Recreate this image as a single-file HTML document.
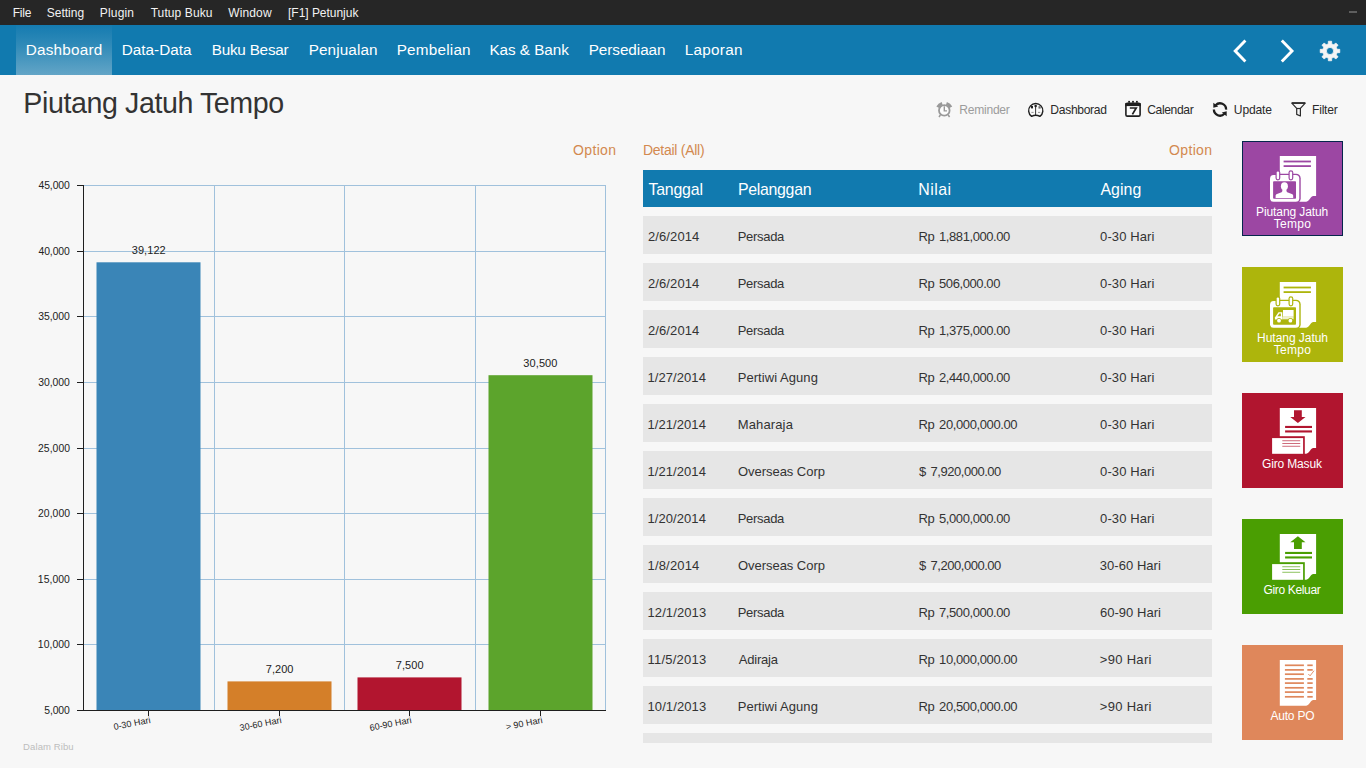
<!DOCTYPE html>
<html lang="id"><head><meta charset="utf-8"><title>Piutang Jatuh Tempo</title>
<style>
html,body{margin:0;padding:0;}
body{width:1366px;height:768px;overflow:hidden;background:#f7f7f7;font-family:"Liberation Sans", sans-serif;position:relative;}
.t{position:absolute;margin:0;white-space:pre;line-height:20px;font-weight:normal;font-family:"Liberation Sans", sans-serif;z-index:3;}
.b{position:absolute;z-index:1;}
svg{position:absolute;left:0;top:0;z-index:2;}
.row{left:643px;width:569px;height:38px;background:#e6e6e6;}
.tile{left:1242px;width:101px;height:95px;}
</style></head>
<body>
<header id="menubar">
<div class="b" style="left:0;top:0;width:1366px;height:25px;background:#262626"></div>
<div class="b" style="left:1349px;top:11px;width:8px;height:2px;background:#5e5e5e"></div>
<span class="t" style="left:12.74px;top:2.84px;font-size:12px;color:#f2f2f2;letter-spacing:-0.240px;">File</span>
<span class="t" style="left:46.73px;top:2.84px;font-size:12px;color:#f2f2f2;letter-spacing:0.003px;">Setting</span>
<span class="t" style="left:99.74px;top:2.84px;font-size:12px;color:#f2f2f2;letter-spacing:0.187px;">Plugin</span>
<span class="t" style="left:150.64px;top:2.84px;font-size:12px;color:#f2f2f2;letter-spacing:0.096px;">Tutup Buku</span>
<span class="t" style="left:228.31px;top:2.84px;font-size:12px;color:#f2f2f2;letter-spacing:0.119px;">Window</span>
<span class="t" style="left:288.02px;top:2.84px;font-size:12px;color:#f2f2f2;letter-spacing:-0.026px;">[F1] Petunjuk</span>
</header>
<nav id="ribbon">
<div class="b" style="left:0;top:25px;width:1366px;height:50px;background:#117aaf"></div>
<div class="b" style="left:16px;top:25px;width:96px;height:50px;background:linear-gradient(to bottom,#157bb0 0%,#2f8ab8 40%,#63a5c7 100%)"></div>
<span class="t" style="left:25.79px;top:39.70px;font-size:15.3px;color:#ffffff;letter-spacing:0.208px;">Dashboard</span>
<span class="t" style="left:121.73px;top:39.70px;font-size:15.3px;color:#ffffff;letter-spacing:0.011px;">Data-Data</span>
<span class="t" style="left:211.73px;top:39.70px;font-size:15.3px;color:#ffffff;letter-spacing:-0.237px;">Buku Besar</span>
<span class="t" style="left:308.73px;top:39.70px;font-size:15.3px;color:#ffffff;letter-spacing:0.097px;">Penjualan</span>
<span class="t" style="left:396.73px;top:39.70px;font-size:15.3px;color:#ffffff;letter-spacing:0.200px;">Pembelian</span>
<span class="t" style="left:489.42px;top:39.70px;font-size:15.3px;color:#ffffff;letter-spacing:-0.052px;">Kas &amp; Bank</span>
<span class="t" style="left:588.73px;top:39.70px;font-size:15.3px;color:#ffffff;letter-spacing:-0.063px;">Persediaan</span>
<span class="t" style="left:684.73px;top:39.70px;font-size:15.3px;color:#ffffff;letter-spacing:0.267px;">Laporan</span>
</nav>
<div id="pagehead">
<h1 class="t" style="left:23.37px;top:93.09px;font-size:28.6px;color:#333333;letter-spacing:-0.410px;">Piutang Jatuh Tempo</h1>
<span class="t" style="left:959.28px;top:99.81px;font-size:12.1px;color:#9c9c9c;letter-spacing:-0.266px;">Reminder</span>
<span class="t" style="left:1050.35px;top:99.81px;font-size:12.1px;color:#2a2a2a;letter-spacing:-0.320px;">Dashborad</span>
<span class="t" style="left:1147.15px;top:99.81px;font-size:12.1px;color:#2a2a2a;letter-spacing:-0.356px;">Calendar</span>
<span class="t" style="left:1233.84px;top:99.81px;font-size:12.1px;color:#2a2a2a;letter-spacing:-0.157px;">Update</span>
<span class="t" style="left:1312.07px;top:99.81px;font-size:12.1px;color:#2a2a2a;letter-spacing:-0.243px;">Filter</span>
</div>
<section id="chart">
<span class="t" style="left:573.10px;top:140.15px;font-size:14px;color:#d3894f;letter-spacing:0.328px;">Option</span>
<span class="t" style="left:38.46px;top:175.90px;font-size:10.4px;color:#222222;letter-spacing:-0.085px;">45,000</span>
<span class="t" style="left:38.46px;top:241.90px;font-size:10.4px;color:#222222;letter-spacing:-0.085px;">40,000</span>
<span class="t" style="left:38.17px;top:306.90px;font-size:10.4px;color:#222222;letter-spacing:-0.029px;">35,000</span>
<span class="t" style="left:38.17px;top:372.90px;font-size:10.4px;color:#222222;letter-spacing:-0.029px;">30,000</span>
<span class="t" style="left:38.07px;top:438.90px;font-size:10.4px;color:#222222;letter-spacing:0.030px;">25,000</span>
<span class="t" style="left:38.07px;top:503.90px;font-size:10.4px;color:#222222;letter-spacing:0.030px;">20,000</span>
<span class="t" style="left:37.87px;top:569.90px;font-size:10.4px;color:#222222;letter-spacing:0.032px;">15,000</span>
<span class="t" style="left:37.87px;top:634.90px;font-size:10.4px;color:#222222;letter-spacing:0.032px;">10,000</span>
<span class="t" style="left:44.20px;top:700.90px;font-size:10.4px;color:#222222;letter-spacing:-0.086px;">5,000</span>
<span class="t" style="left:131.71px;top:240.19px;font-size:11px;color:#222222;letter-spacing:0.072px;">39,122</span>
<span class="t" style="left:523.32px;top:353.19px;font-size:11px;color:#222222;letter-spacing:0.098px;">30,500</span>
<span class="t" style="left:265.79px;top:659.19px;font-size:11px;color:#222222;letter-spacing:0.021px;">7,200</span>
<span class="t" style="left:395.79px;top:655.19px;font-size:11px;color:#222222;letter-spacing:0.075px;">7,500</span>
<span class="t" style="left:23.08px;top:736.71px;font-size:9.5px;color:#bdbdbd;letter-spacing:0.105px;">Dalam Ribu</span>
</section>
<section id="detail">
<div class="b" style="left:643px;top:170px;width:569px;height:37px;background:#117aaf"></div>
<div class="b row" style="top:216px;"></div>
<div class="b row" style="top:263px;"></div>
<div class="b row" style="top:310px;"></div>
<div class="b row" style="top:357px;"></div>
<div class="b row" style="top:404px;"></div>
<div class="b row" style="top:451px;"></div>
<div class="b row" style="top:498px;"></div>
<div class="b row" style="top:545px;"></div>
<div class="b row" style="top:592px;"></div>
<div class="b row" style="top:639px;"></div>
<div class="b row" style="top:686px;"></div>
<div class="b row" style="top:733px;height:10px;"></div>
<span class="t" style="left:643.03px;top:140.15px;font-size:14px;color:#d3894f;letter-spacing:-0.269px;">Detail (All)</span>
<span class="t" style="left:1169.10px;top:140.15px;font-size:14px;color:#d3894f;letter-spacing:0.328px;">Option</span>
<span class="t" style="left:648.40px;top:179.99px;font-size:15.9px;color:#ffffff;letter-spacing:-0.185px;">Tanggal</span>
<span class="t" style="left:737.94px;top:179.99px;font-size:15.9px;color:#ffffff;letter-spacing:-0.300px;">Pelanggan</span>
<span class="t" style="left:918.36px;top:179.99px;font-size:15.9px;color:#ffffff;letter-spacing:0.449px;">Nilai</span>
<span class="t" style="left:1100.38px;top:179.99px;font-size:15.9px;color:#ffffff;letter-spacing:0.059px;">Aging</span>
<span class="t" style="left:647.94px;top:226.50px;font-size:13px;color:#333333;letter-spacing:0.115px;">2/6/2014</span>
<span class="t" style="left:737.67px;top:226.50px;font-size:13px;color:#333333;letter-spacing:-0.296px;">Persada</span>
<span class="t" style="left:918.44px;top:226.50px;font-size:13px;color:#333333;letter-spacing:-0.417px;word-spacing:1.6px;">Rp 1,881,000.00</span>
<span class="t" style="left:1100.12px;top:226.50px;font-size:13px;color:#333333;letter-spacing:0.103px;">0-30 Hari</span>
<span class="t" style="left:647.94px;top:273.50px;font-size:13px;color:#333333;letter-spacing:0.115px;">2/6/2014</span>
<span class="t" style="left:737.67px;top:273.50px;font-size:13px;color:#333333;letter-spacing:-0.296px;">Persada</span>
<span class="t" style="left:918.44px;top:273.50px;font-size:13px;color:#333333;letter-spacing:-0.409px;word-spacing:1.6px;">Rp 506,000.00</span>
<span class="t" style="left:1100.12px;top:273.50px;font-size:13px;color:#333333;letter-spacing:0.103px;">0-30 Hari</span>
<span class="t" style="left:647.94px;top:320.50px;font-size:13px;color:#333333;letter-spacing:0.115px;">2/6/2014</span>
<span class="t" style="left:737.67px;top:320.50px;font-size:13px;color:#333333;letter-spacing:-0.296px;">Persada</span>
<span class="t" style="left:918.44px;top:320.50px;font-size:13px;color:#333333;letter-spacing:-0.417px;word-spacing:1.6px;">Rp 1,375,000.00</span>
<span class="t" style="left:1100.12px;top:320.50px;font-size:13px;color:#333333;letter-spacing:0.103px;">0-30 Hari</span>
<span class="t" style="left:647.50px;top:367.50px;font-size:13px;color:#333333;letter-spacing:0.071px;">1/27/2014</span>
<span class="t" style="left:737.67px;top:367.50px;font-size:13px;color:#333333;letter-spacing:0.060px;">Pertiwi Agung</span>
<span class="t" style="left:918.44px;top:367.50px;font-size:13px;color:#333333;letter-spacing:-0.417px;word-spacing:1.6px;">Rp 2,440,000.00</span>
<span class="t" style="left:1100.12px;top:367.50px;font-size:13px;color:#333333;letter-spacing:0.103px;">0-30 Hari</span>
<span class="t" style="left:647.50px;top:414.50px;font-size:13px;color:#333333;letter-spacing:0.071px;">1/21/2014</span>
<span class="t" style="left:737.67px;top:414.50px;font-size:13px;color:#333333;letter-spacing:0.145px;">Maharaja</span>
<span class="t" style="left:918.44px;top:414.50px;font-size:13px;color:#333333;letter-spacing:-0.388px;word-spacing:1.6px;">Rp 20,000,000.00</span>
<span class="t" style="left:1100.12px;top:414.50px;font-size:13px;color:#333333;letter-spacing:0.103px;">0-30 Hari</span>
<span class="t" style="left:647.50px;top:461.50px;font-size:13px;color:#333333;letter-spacing:0.071px;">1/21/2014</span>
<span class="t" style="left:738.06px;top:461.50px;font-size:13px;color:#333333;letter-spacing:-0.048px;">Overseas Corp</span>
<span class="t" style="left:919.12px;top:461.50px;font-size:13px;color:#333333;letter-spacing:-0.475px;word-spacing:1.6px;">$ 7,920,000.00</span>
<span class="t" style="left:1100.12px;top:461.50px;font-size:13px;color:#333333;letter-spacing:0.103px;">0-30 Hari</span>
<span class="t" style="left:647.50px;top:508.50px;font-size:13px;color:#333333;letter-spacing:0.071px;">1/20/2014</span>
<span class="t" style="left:737.67px;top:508.50px;font-size:13px;color:#333333;letter-spacing:-0.296px;">Persada</span>
<span class="t" style="left:918.44px;top:508.50px;font-size:13px;color:#333333;letter-spacing:-0.417px;word-spacing:1.6px;">Rp 5,000,000.00</span>
<span class="t" style="left:1100.12px;top:508.50px;font-size:13px;color:#333333;letter-spacing:0.103px;">0-30 Hari</span>
<span class="t" style="left:647.50px;top:555.50px;font-size:13px;color:#333333;letter-spacing:0.178px;">1/8/2014</span>
<span class="t" style="left:738.06px;top:555.50px;font-size:13px;color:#333333;letter-spacing:-0.048px;">Overseas Corp</span>
<span class="t" style="left:919.12px;top:555.50px;font-size:13px;color:#333333;letter-spacing:-0.475px;word-spacing:1.6px;">$ 7,200,000.00</span>
<span class="t" style="left:1099.79px;top:555.50px;font-size:13px;color:#333333;letter-spacing:0.044px;">30-60 Hari</span>
<span class="t" style="left:647.50px;top:602.50px;font-size:13px;color:#333333;letter-spacing:0.097px;">12/1/2013</span>
<span class="t" style="left:737.67px;top:602.50px;font-size:13px;color:#333333;letter-spacing:-0.296px;">Persada</span>
<span class="t" style="left:918.44px;top:602.50px;font-size:13px;color:#333333;letter-spacing:-0.417px;word-spacing:1.6px;">Rp 7,500,000.00</span>
<span class="t" style="left:1099.94px;top:602.50px;font-size:13px;color:#333333;letter-spacing:0.028px;">60-90 Hari</span>
<span class="t" style="left:647.50px;top:649.50px;font-size:13px;color:#333333;letter-spacing:0.225px;">11/5/2013</span>
<span class="t" style="left:738.66px;top:649.50px;font-size:13px;color:#333333;letter-spacing:-0.178px;">Adiraja</span>
<span class="t" style="left:918.44px;top:649.50px;font-size:13px;color:#333333;letter-spacing:-0.388px;word-spacing:1.6px;">Rp 10,000,000.00</span>
<span class="t" style="left:1099.79px;top:649.50px;font-size:13px;color:#333333;letter-spacing:0.308px;">&gt;90 Hari</span>
<span class="t" style="left:647.50px;top:696.50px;font-size:13px;color:#333333;letter-spacing:0.097px;">10/1/2013</span>
<span class="t" style="left:737.67px;top:696.50px;font-size:13px;color:#333333;letter-spacing:0.060px;">Pertiwi Agung</span>
<span class="t" style="left:918.44px;top:696.50px;font-size:13px;color:#333333;letter-spacing:-0.388px;word-spacing:1.6px;">Rp 20,500,000.00</span>
<span class="t" style="left:1099.79px;top:696.50px;font-size:13px;color:#333333;letter-spacing:0.308px;">&gt;90 Hari</span>
</section>
<aside id="tiles">
<div class="b tile" style="top:141px;background:#9c47a3;box-sizing:border-box;border:1px solid #05264c;"></div>
<div class="b tile" style="top:267px;background:#adb50c;"></div>
<div class="b tile" style="top:393px;background:#b1152f;"></div>
<div class="b tile" style="top:519px;background:#4a9e02;"></div>
<div class="b tile" style="top:645px;background:#df875b;"></div>
<span class="t" style="left:1256.01px;top:201.84px;font-size:12px;color:#ffffff;letter-spacing:-0.095px;">Piutang Jatuh</span>
<span class="t" style="left:1273.64px;top:213.84px;font-size:12px;color:#ffffff;letter-spacing:0.326px;">Tempo</span>
<span class="t" style="left:1257.07px;top:327.84px;font-size:12px;color:#ffffff;letter-spacing:-0.037px;">Hutang Jatuh</span>
<span class="t" style="left:1273.64px;top:339.84px;font-size:12px;color:#ffffff;letter-spacing:0.326px;">Tempo</span>
<span class="t" style="left:1262.05px;top:453.84px;font-size:12px;color:#ffffff;letter-spacing:-0.165px;">Giro Masuk</span>
<span class="t" style="left:1263.43px;top:579.84px;font-size:12px;color:#ffffff;letter-spacing:-0.331px;">Giro Keluar</span>
<span class="t" style="left:1270.39px;top:705.84px;font-size:12px;color:#ffffff;letter-spacing:-0.192px;">Auto PO</span>
</aside>
<svg width="1366" height="768" viewBox="0 0 1366 768">
<g shape-rendering="crispEdges">
<line x1="84" x2="606" y1="185.5" y2="185.5" stroke="#a0c1dc" stroke-width="1"/>
<line x1="84" x2="606" y1="251.5" y2="251.5" stroke="#a0c1dc" stroke-width="1"/>
<line x1="84" x2="606" y1="316.5" y2="316.5" stroke="#a0c1dc" stroke-width="1"/>
<line x1="84" x2="606" y1="382.5" y2="382.5" stroke="#a0c1dc" stroke-width="1"/>
<line x1="84" x2="606" y1="448.5" y2="448.5" stroke="#a0c1dc" stroke-width="1"/>
<line x1="84" x2="606" y1="513.5" y2="513.5" stroke="#a0c1dc" stroke-width="1"/>
<line x1="84" x2="606" y1="579.5" y2="579.5" stroke="#a0c1dc" stroke-width="1"/>
<line x1="84" x2="606" y1="644.5" y2="644.5" stroke="#a0c1dc" stroke-width="1"/>
<line x1="214.5" x2="214.5" y1="185" y2="710" stroke="#a0c1dc" stroke-width="1"/>
<line x1="344.5" x2="344.5" y1="185" y2="710" stroke="#a0c1dc" stroke-width="1"/>
<line x1="475.5" x2="475.5" y1="185" y2="710" stroke="#a0c1dc" stroke-width="1"/>
<line x1="605.5" x2="605.5" y1="185" y2="710" stroke="#a0c1dc" stroke-width="1"/>
</g>
<rect x="96.5" y="262.3" width="104.0" height="447.7" fill="#3a85b7"/>
<rect x="227.5" y="681.4" width="104.0" height="28.600000000000023" fill="#d47f29"/>
<rect x="357.5" y="677.4" width="104.0" height="32.60000000000002" fill="#b2152f"/>
<rect x="488.5" y="375.2" width="104.0" height="334.8" fill="#5ca42c"/>
<g shape-rendering="crispEdges">
<line x1="83.5" x2="83.5" y1="185" y2="711" stroke="#1e1e1e" stroke-width="1"/>
<line x1="83" x2="606" y1="710.5" y2="710.5" stroke="#1e1e1e" stroke-width="1"/>
<line x1="77" x2="83" y1="185.5" y2="185.5" stroke="#1e1e1e" stroke-width="1"/>
<line x1="77" x2="83" y1="251.5" y2="251.5" stroke="#1e1e1e" stroke-width="1"/>
<line x1="77" x2="83" y1="316.5" y2="316.5" stroke="#1e1e1e" stroke-width="1"/>
<line x1="77" x2="83" y1="382.5" y2="382.5" stroke="#1e1e1e" stroke-width="1"/>
<line x1="77" x2="83" y1="448.5" y2="448.5" stroke="#1e1e1e" stroke-width="1"/>
<line x1="77" x2="83" y1="513.5" y2="513.5" stroke="#1e1e1e" stroke-width="1"/>
<line x1="77" x2="83" y1="579.5" y2="579.5" stroke="#1e1e1e" stroke-width="1"/>
<line x1="77" x2="83" y1="644.5" y2="644.5" stroke="#1e1e1e" stroke-width="1"/>
<line x1="77" x2="83" y1="710.5" y2="710.5" stroke="#1e1e1e" stroke-width="1"/>
<line x1="148.5" x2="148.5" y1="711" y2="716" stroke="#1e1e1e" stroke-width="1"/>
<line x1="279.5" x2="279.5" y1="711" y2="716" stroke="#1e1e1e" stroke-width="1"/>
<line x1="409.5" x2="409.5" y1="711" y2="716" stroke="#1e1e1e" stroke-width="1"/>
<line x1="540.5" x2="540.5" y1="711" y2="716" stroke="#1e1e1e" stroke-width="1"/>
</g>
<text x="150.9" y="722.8" text-anchor="end" transform="rotate(-11 150.9 722.8)" font-family="Liberation Sans, sans-serif" font-size="9.1" fill="#222">0-30 Hari</text>
<text x="281.9" y="722.8" text-anchor="end" transform="rotate(-11 281.9 722.8)" font-family="Liberation Sans, sans-serif" font-size="9.1" fill="#222">30-60 Hari</text>
<text x="411.9" y="722.8" text-anchor="end" transform="rotate(-11 411.9 722.8)" font-family="Liberation Sans, sans-serif" font-size="9.1" fill="#222">60-90 Hari</text>
<text x="542.9" y="722.8" text-anchor="end" transform="rotate(-11 542.9 722.8)" font-family="Liberation Sans, sans-serif" font-size="9.1" fill="#222">&gt; 90 Hari</text>
<polyline points="1245.4,40.6 1235.2,51 1245.4,61.4" fill="none" stroke="#ffffff" stroke-width="2.9" stroke-linejoin="miter"/>
<polyline points="1281.8,40.6 1292,51 1281.8,61.4" fill="none" stroke="#ffffff" stroke-width="2.9" stroke-linejoin="miter"/>
<path d="M1328.34,43.89 L1328.33,41.24 L1331.67,41.24 L1331.66,43.89 L1333.85,44.80 L1335.72,42.92 L1338.08,45.28 L1336.20,47.15 L1337.11,49.34 L1339.76,49.33 L1339.76,52.67 L1337.11,52.66 L1336.20,54.85 L1338.08,56.72 L1335.72,59.08 L1333.85,57.20 L1331.66,58.11 L1331.67,60.76 L1328.33,60.76 L1328.34,58.11 L1326.15,57.20 L1324.28,59.08 L1321.92,56.72 L1323.80,54.85 L1322.89,52.66 L1320.24,52.67 L1320.24,49.33 L1322.89,49.34 L1323.80,47.15 L1321.92,45.28 L1324.28,42.92 L1326.15,44.80 Z M1326.4,51 a3.6,3.6 0 1,0 7.2,0 a3.6,3.6 0 1,0 -7.2,0 Z" fill="#f4f4f4" fill-rule="evenodd" stroke="#f4f4f4" stroke-width="0.8" stroke-linejoin="round"/>
<path d="M937.74,107.20 A7.3,7.3 0 0,1 942.17,103.42" fill="none" stroke="#999999" stroke-width="3.1"/>
<path d="M946.43,103.42 A7.3,7.3 0 0,1 950.86,107.20" fill="none" stroke="#999999" stroke-width="3.1"/>
<circle cx="944.3" cy="110.4" r="5.3" fill="#fcfcfc" stroke="#999999" stroke-width="1.8"/>
<path d="M944.3,106.2 V110.9 H947" fill="none" stroke="#999999" stroke-width="1.4"/>
<path d="M940.4,115 L939,117 M948.2,115 L949.6,117" fill="none" stroke="#999999" stroke-width="1.5"/>
<path d="M1031.6,116.4 A7.1,7.1 0 1,1 1039.9,116.4 Q1035.75,114 1031.6,116.4 Z" fill="#fbfbfb" stroke="#1f1f1f" stroke-width="1.4" stroke-linejoin="round"/>
<line x1="1035.6" x2="1035.6" y1="105.4" y2="115" stroke="#1f1f1f" stroke-width="0.9"/>
<circle cx="1035.6" cy="105.9" r="1.25" fill="#1f1f1f"/>
<rect x="1031" y="106" width="2" height="2.4" fill="#1f1f1f"/>
<rect x="1038.5" y="106.2" width="2.2" height="2.4" fill="#6a6a6a"/>
<path d="M1031.4,112.4 h2.2 M1038,112.4 h2.2" stroke="#888" stroke-width="0.9"/>
<rect x="1125.9" y="103.3" width="14.2" height="12.8" rx="1.4" fill="#fdfdfd" stroke="#1f1f1f" stroke-width="1.6"/>
<rect x="1125.2" y="103.2" width="15.6" height="2.9" fill="#1f1f1f"/>
<rect x="1128.1999999999998" y="100.9" width="1.8" height="1.8" fill="#1f1f1f"/>
<rect x="1132.1" y="100.9" width="1.8" height="1.8" fill="#1f1f1f"/>
<rect x="1136.0" y="100.9" width="1.8" height="1.8" fill="#1f1f1f"/>
<path d="M1129.8,108 H1136.2 L1132.4,114.4" fill="none" stroke="#1f1f1f" stroke-width="1.7" stroke-linejoin="miter"/>
<path d="M1215.6,105.2 A6.1,6.1 0 0,1 1226.1,109.6" fill="none" stroke="#1f1f1f" stroke-width="2.3"/>
<path d="M1213.3,102.8 L1213.3,107.8 L1218.2,106.6 Z" fill="#1f1f1f"/>
<path d="M1224.4,113.8 A6.1,6.1 0 0,1 1213.9,109.6" fill="none" stroke="#1f1f1f" stroke-width="2.3"/>
<path d="M1226.7,116.2 L1226.7,111.2 L1221.8,112.4 Z" fill="#1f1f1f"/>
<path d="M1291.8,103.2 H1305.2 L1300.4,108.4 V116 L1296.7,114.4 V108.4 Z" fill="none" stroke="#2b2b2b" stroke-width="1.2" stroke-linejoin="round"/>
<line x1="1291.8" x2="1305.2" y1="103" y2="103" stroke="#2b2b2b" stroke-width="1.6"/>
<line x1="1296.7" x2="1300.4" y1="108.5" y2="108.5" stroke="#2b2b2b" stroke-width="1.2"/>
<path d="M1279.8,156 H1316.1 V196.0 H1313.4 C1310.6,196.20000000000002 1310,200.60000000000002 1306.2,201.8 H1279.8 Z" fill="#fff"/>
<rect x="1283.6" y="160.6" width="27.3" height="1.8" fill="#9c47a3"/>
<rect x="1283.6" y="165.2" width="27.3" height="1.8" fill="#9c47a3"/>
<rect x="1268.8" y="173.7" width="31.9" height="29.3" rx="4.6" fill="#9c47a3"/>
<rect x="1270" y="174.9" width="29.3" height="26.9" rx="3.6" fill="#fff"/>
<rect x="1273.1" y="181.2" width="22.9" height="17.6" rx="0.8" fill="#9c47a3"/>
<rect x="1275.5" y="170.2" width="4.8" height="10.2" rx="2.4" fill="#9c47a3"/>
<rect x="1276.7" y="171.4" width="2.4" height="7.8" rx="1.2" fill="#fff"/>
<rect x="1288.5" y="170.2" width="4.8" height="10.2" rx="2.4" fill="#9c47a3"/>
<rect x="1289.7" y="171.4" width="2.4" height="7.8" rx="1.2" fill="#fff"/>
<ellipse cx="1284.4" cy="186.3" rx="3.5" ry="4.1" fill="#fff"/>
<path d="M1275.6,198.1 V195.4 Q1275.8,194.4 1277,194 L1281.6,192.2 Q1282.6,191.6 1282.4,189.6 H1286.4 Q1286.2,191.6 1287.2,192.2 L1291.8,194 Q1293,194.4 1293.2,195.4 V198.1 Z" fill="#fff"/>
<path d="M1279.8,282 H1316.1 V322.0 H1313.4 C1310.6,322.2 1310,326.6 1306.2,327.8 H1279.8 Z" fill="#fff"/>
<rect x="1283.6" y="286.6" width="27.3" height="1.8" fill="#adb50c"/>
<rect x="1283.6" y="291.2" width="27.3" height="1.8" fill="#adb50c"/>
<rect x="1268.8" y="299.7" width="31.9" height="29.3" rx="4.6" fill="#adb50c"/>
<rect x="1270" y="300.9" width="29.3" height="26.9" rx="3.6" fill="#fff"/>
<rect x="1273.1" y="307.2" width="22.9" height="17.6" rx="0.8" fill="#adb50c"/>
<rect x="1275.5" y="296.2" width="4.8" height="10.2" rx="2.4" fill="#adb50c"/>
<rect x="1276.7" y="297.4" width="2.4" height="7.8" rx="1.2" fill="#fff"/>
<rect x="1288.5" y="296.2" width="4.8" height="10.2" rx="2.4" fill="#adb50c"/>
<rect x="1289.7" y="297.4" width="2.4" height="7.8" rx="1.2" fill="#fff"/>
<rect x="1283" y="310" width="10.6" height="6.7" fill="#fff"/>
<rect x="1282.4" y="316.7" width="11.2" height="2.6" fill="#fff" opacity="0.8"/>
<path d="M1274.9,319.6 V317.6 L1278.5,312.3 H1282.3 V319.6 Z" fill="#fff"/>
<path d="M1277.4,316.2 L1279.4,313.4 H1280.9 V316.2 Z" fill="#adb50c"/>
<circle cx="1279" cy="320.6" r="2.5" fill="#adb50c"/>
<circle cx="1290.4" cy="320.6" r="2.5" fill="#adb50c"/>
<circle cx="1279" cy="320.7" r="1.9" fill="#fff"/>
<circle cx="1290.4" cy="320.7" r="1.9" fill="#fff"/>
<path d="M1279.8,408 H1316.1 V448.0 H1313.4 C1310.6,448.2 1310,452.6 1306.2,453.8 H1279.8 Z" fill="#fff"/>
<path d="M1294.0,410.2 H1301.8000000000002 V417 H1305.5 L1297.9,423.1 L1290.3000000000002,417 H1294.0 Z" fill="#b1152f"/>
<rect x="1285.1" y="425.9" width="26.9" height="2.1" fill="#b1152f"/>
<rect x="1285.1" y="430.4" width="26.9" height="2.1" fill="#b1152f"/>
<rect x="1271" y="436.2" width="33.8" height="18.8" fill="#b1152f"/>
<rect x="1272.1" y="438.1" width="31" height="15.7" fill="#fff"/>
<rect x="1282.3" y="440.3" width="17.9" height="0.9" fill="#b1152f" opacity="0.7"/>
<rect x="1282.3" y="443.0" width="17.9" height="0.9" fill="#b1152f" opacity="0.7"/>
<rect x="1282.3" y="445.8" width="17.9" height="0.9" fill="#b1152f" opacity="0.7"/>
<path d="M1279.8,534 H1316.1 V574.0 H1313.4 C1310.6,574.1999999999999 1310,578.5999999999999 1306.2,579.8 H1279.8 Z" fill="#fff"/>
<path d="M1294.0,549.1 H1301.8000000000002 V542.3 H1305.5 L1297.9,536.2 L1290.3000000000002,542.3 H1294.0 Z" fill="#4a9e02"/>
<rect x="1285.1" y="551.9" width="26.9" height="2.1" fill="#4a9e02"/>
<rect x="1285.1" y="556.4" width="26.9" height="2.1" fill="#4a9e02"/>
<rect x="1271" y="562.2" width="33.8" height="18.8" fill="#4a9e02"/>
<rect x="1272.1" y="564.1" width="31" height="15.7" fill="#fff"/>
<rect x="1282.3" y="566.3" width="17.9" height="0.9" fill="#4a9e02" opacity="0.7"/>
<rect x="1282.3" y="569.0" width="17.9" height="0.9" fill="#4a9e02" opacity="0.7"/>
<rect x="1282.3" y="571.8" width="17.9" height="0.9" fill="#4a9e02" opacity="0.7"/>
<path d="M1279.8,660 H1316.1 V700.0 H1313.4 C1310.6,700.1999999999999 1310,704.5999999999999 1306.2,705.8 H1279.8 Z" fill="#fff"/>
<rect x="1284.9" y="664.4499999999999" width="19" height="1.7" fill="#df875b"/>
<rect x="1307.3" y="664.4499999999999" width="5.4" height="1.7" fill="#df875b"/>
<rect x="1284.9" y="669.05" width="19" height="1.7" fill="#df875b"/>
<rect x="1307.3" y="669.05" width="5.4" height="1.7" fill="#df875b"/>
<rect x="1284.9" y="673.35" width="19" height="1.7" fill="#df875b"/>
<rect x="1284.9" y="678.05" width="19" height="1.7" fill="#df875b"/>
<rect x="1307.3" y="678.05" width="5.4" height="1.7" fill="#df875b"/>
<rect x="1284.9" y="682.25" width="19" height="1.7" fill="#df875b"/>
<rect x="1307.3" y="682.25" width="5.4" height="1.7" fill="#df875b"/>
<rect x="1284.9" y="686.9499999999999" width="19" height="1.7" fill="#df875b"/>
<rect x="1307.3" y="686.9499999999999" width="5.4" height="1.7" fill="#df875b"/>
<rect x="1284.9" y="691.25" width="19" height="1.7" fill="#df875b"/>
<rect x="1307.3" y="691.25" width="5.4" height="1.7" fill="#df875b"/>
<rect x="1284.9" y="695.9499999999999" width="19" height="1.7" fill="#df875b"/>
<rect x="1307.3" y="695.9499999999999" width="5.4" height="1.7" fill="#df875b"/>
<path d="M1308.3,674 L1310.1,675.8 L1314,670.7" fill="none" stroke="#df875b" stroke-width="0.9"/>
</svg>
</body></html>
